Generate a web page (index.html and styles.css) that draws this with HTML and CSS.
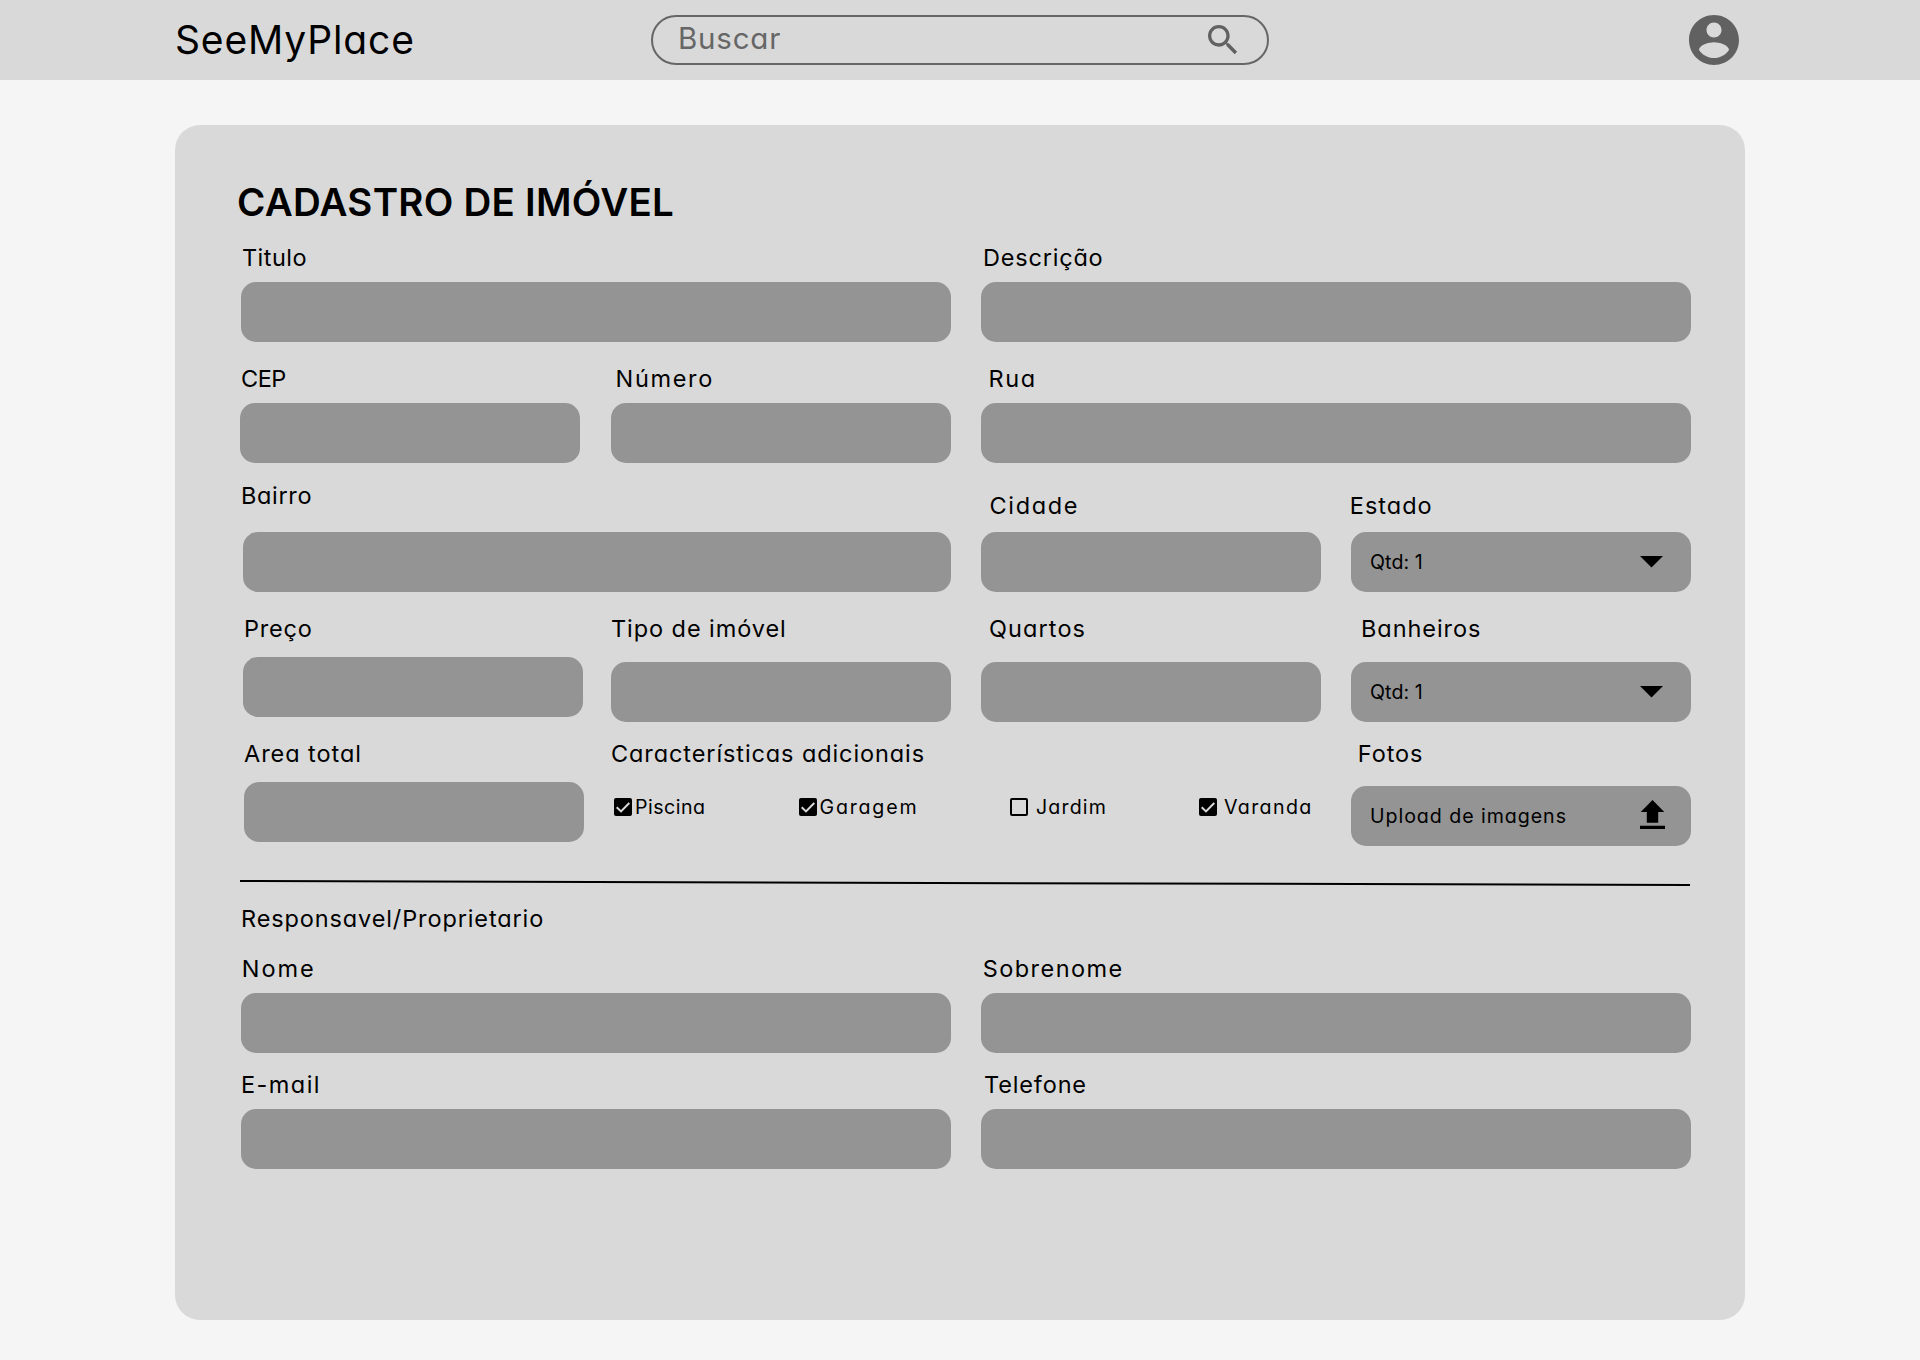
FILE: index.html
```html
<!DOCTYPE html>
<html lang="pt-BR">
<head>
<meta charset="utf-8">
<title>SeeMyPlace</title>
<link rel="stylesheet" href="styles.css">
</head>
<body>
<header class="topbar">
  <span class="brand">SeeMyPlace</span>
  <div class="search">
    <span class="search-text">Buscar</span>
    <svg class="search-icon" viewBox="0 0 24 24"><path d="M15.5 14h-.79l-.28-.27C15.41 12.59 16 11.11 16 9.5 16 5.91 13.09 3 9.5 3S3 5.91 3 9.5 5.91 16 9.5 16c1.61 0 3.09-.59 4.23-1.57l.27.28v.79l5 4.99L20.49 19l-4.99-5zm-6 0C7.01 14 5 11.99 5 9.5S7.01 5 9.5 5 14 7.01 14 9.5 11.99 14 9.5 14z"/></svg>
  </div>
  <svg class="account" viewBox="2 2 20 20"><path d="M12 2C6.48 2 2 6.48 2 12s4.48 10 10 10 10-4.48 10-10S17.52 2 12 2zm0 3c1.66 0 3 1.34 3 3s-1.34 3-3 3-3-1.34-3-3 1.34-3 3-3zm0 14.2c-2.5 0-4.71-1.28-6-3.22.03-1.99 4-3.08 6-3.08 1.99 0 5.97 1.09 6 3.08-1.29 1.94-3.5 3.22-6 3.22z"/></svg>
</header>

<main class="card">
  <h1 class="title">CADASTRO DE IMÓVEL</h1>

  <div class="row">
    <div class="cell wide"><span class="label titulo">Titulo</span><div class="field"></div></div>
    <div class="cell wide"><span class="label descricao">Descrição</span><div class="field"></div></div>
  </div>

  <div class="row row-endereco">
    <div class="cell"><span class="label cep">CEP</span><div class="field field-cep"></div></div>
    <div class="cell"><span class="label numero">Número</span><div class="field"></div></div>
    <div class="cell wide"><span class="label rua">Rua</span><div class="field"></div></div>
  </div>

  <div class="row row-bairro">
    <div class="cell wide cell-bairro"><span class="label bairro">Bairro</span><div class="field field-bairro"></div></div>
    <div class="cell cell-low"><span class="label cidade">Cidade</span><div class="field"></div></div>
    <div class="cell cell-low"><span class="label estado">Estado</span>
      <div class="field select"><span class="value qtd">Qtd: 1</span><svg class="caret" viewBox="0 0 23 12"><path d="M0 0h23L11.5 11.5z"/></svg></div>
    </div>
  </div>

  <div class="row row-preco">
    <div class="cell cell-preco"><span class="label preco">Preço</span><div class="field field-preco"></div></div>
    <div class="cell"><span class="label tipo">Tipo de imóvel</span><div class="field"></div></div>
    <div class="cell"><span class="label quartos">Quartos</span><div class="field"></div></div>
    <div class="cell"><span class="label banheiros">Banheiros</span>
      <div class="field select"><span class="value qtd">Qtd: 1</span><svg class="caret" viewBox="0 0 23 12"><path d="M0 0h23L11.5 11.5z"/></svg></div>
    </div>
  </div>

  <div class="row row-area">
    <div class="cell cell-area"><span class="label area">Area total</span><div class="field field-area"></div></div>
    <div class="cell wide"><span class="label caracteristicas">Características adicionais</span>
      <div class="options">
        <div class="option piscina"><svg class="box" viewBox="0 0 18 18"><rect width="18" height="18" rx="2"/><path class="tick" d="M2.7 9.2 7 13.4 15.3 5"/></svg><span class="value">Piscina</span></div>
        <div class="option garagem"><svg class="box" viewBox="0 0 18 18"><rect width="18" height="18" rx="2"/><path class="tick" d="M2.7 9.2 7 13.4 15.3 5"/></svg><span class="value">Garagem</span></div>
        <div class="option jardim"><svg class="box" viewBox="0 0 18 18"><rect class="empty" x="1" y="1" width="16" height="16" rx="1"/></svg><span class="value">Jardim</span></div>
        <div class="option varanda"><svg class="box" viewBox="0 0 18 18"><rect width="18" height="18" rx="2"/><path class="tick" d="M2.7 9.2 7 13.4 15.3 5"/></svg><span class="value">Varanda</span></div>
      </div>
    </div>
    <div class="cell"><span class="label fotos">Fotos</span>
      <div class="field select"><span class="value upload-text">Upload de imagens</span><svg class="upload" viewBox="0 0 25 29"><path d="M12.5 0 24.3 12H18.2V22.7H6.8V12H.7zM0 25.8H25V29H0z"/></svg></div>
    </div>
  </div>

  <svg class="divider" viewBox="0 0 1450 8"><path d="M0 2 1450 6"/></svg>

  <span class="label responsavel">Responsavel/Proprietario</span>

  <div class="row row-nome">
    <div class="cell wide"><span class="label nome">Nome</span><div class="field"></div></div>
    <div class="cell wide"><span class="label sobrenome">Sobrenome</span><div class="field"></div></div>
  </div>

  <div class="row row-email">
    <div class="cell wide"><span class="label email">E-mail</span><div class="field"></div></div>
    <div class="cell wide"><span class="label telefone">Telefone</span><div class="field"></div></div>
  </div>
</main>
</body>
</html>
```
FILE: styles.css
```css
* { box-sizing: border-box; }

body {
  margin: 0;
  min-height: 1360px;
  background: #f5f5f5;
  color: #000;
  font-family: Inter, "Open Sans", sans-serif;
  font-feature-settings: "cv11";
}

svg { display: block; flex: none; }

/* Top bar */
.topbar {
  display: flex;
  align-items: center;
  justify-content: space-between;
  height: 80px;
  padding: 0 181px 0 175px;
  background: #d9d9d9;
}
.brand {
  width: 476px;
  font-size: 39px;
  line-height: 60px;
  letter-spacing: 0.85px;
}
.search {
  display: flex;
  align-items: center;
  justify-content: space-between;
  width: 618px;
  height: 50px;
  margin-right: 420px;
  padding: 0 24px 0 25px;
  border: 2px solid #666;
  border-radius: 25px;
}
.search-text {
  margin-bottom: 4px;
  color: #666;
  font-size: 29.5px;
  line-height: 40px;
  letter-spacing: 0.8px;
}
.search-icon { width: 40px; height: 40px; fill: #616161; }
.account { width: 50px; height: 50px; fill: #616161; }

/* Form card */
.card {
  display: flex;
  flex-direction: column;
  width: 1570px;
  height: 1195px;
  margin: 45px 0 0 175px;
  padding: 47px 54px 0 66px;
  border-radius: 25px;
  background: #d9d9d9;
}
.title {
  margin: 0 0 8px -4px;
  font-size: 38.5px;
  font-weight: 600;
  line-height: 60px;
  letter-spacing: 0.26px;
}

.row {
  display: grid;
  grid-template-columns: repeat(4, 340px);
  column-gap: 30px;
}
.row-endereco { margin-top: 19px; }
.row-bairro { margin-top: 15px; }
.row-preco { margin-top: 19px; }
.row-area { margin-top: 14px; }
.row-nome { margin-top: 14px; }
.row-email { margin-top: 14px; }

.cell {
  display: flex;
  flex-direction: column;
  gap: 6px;
}
.wide { grid-column: span 2; }
.cell-bairro { gap: 18px; }
.cell-low { gap: 8px; padding-top: 10px; }
.row-preco .cell { gap: 15px; }
.row-preco .cell-preco { gap: 10px; }
.row-area .cell { gap: 14px; }
.row-area .cell-area { gap: 10px; }

.label {
  height: 36px;
  font-size: 23.5px;
  line-height: 36px;
  letter-spacing: 0.93px;
  white-space: nowrap;
}
.titulo { padding-left: 1px; letter-spacing: 0.45px; }
.descricao { padding-left: 2px; letter-spacing: 0.8px; }
.cep { letter-spacing: -0.5px; }
.numero { padding-left: 4.6px; letter-spacing: 1.65px; }
.rua { padding-left: 7.6px; letter-spacing: 1.6px; }
.bairro { letter-spacing: 0.65px; }
.cidade { padding-left: 8.5px; letter-spacing: 1.65px; }
.estado { margin-left: -1.2px; letter-spacing: 1px; }
.preco { padding-left: 3px; letter-spacing: 0.8px; }
.quartos { padding-left: 8px; letter-spacing: 1.1px; }
.banheiros { padding-left: 10px; letter-spacing: 0.93px; }
.area { padding-left: 3px; letter-spacing: 0.95px; }
.caracteristicas { letter-spacing: 0.9px; }
.fotos { padding-left: 6.8px; letter-spacing: 0.9px; }
.responsavel { margin-top: 14px; letter-spacing: 0.88px; }
.nome { padding-left: 0.7px; letter-spacing: 2px; }
.sobrenome { padding-left: 1.7px; letter-spacing: 1.45px; }
.email { letter-spacing: 1.45px; }
.telefone { padding-left: 3px; letter-spacing: 0.85px; }

.field {
  height: 60px;
  border-radius: 15px;
  background: #949494;
}
.field-cep { margin: 0 1px 0 -1px; }
.field-bairro { margin-left: 2px; }
.field-preco { margin: 0 -2px 0 2px; }
.field-area { margin: 0 -3px 0 3px; }

.value {
  font-size: 19.6px;
  line-height: 30px;
  white-space: nowrap;
}
.qtd { letter-spacing: 0.1px; }
.upload-text { letter-spacing: 0.95px; }

.select {
  display: flex;
  align-items: center;
  justify-content: space-between;
  padding: 0 26px 0 19px;
}
.caret { width: 23px; height: 12px; margin-right: 2px; }
.upload { width: 25px; height: 29px; margin-bottom: 3px; }

/* Feature checkboxes */
.options {
  display: flex;
  align-items: center;
  height: 30px;
  margin-top: 6px;
}
.option { display: flex; align-items: center; }
.box { width: 18px; height: 18px; }
.tick { fill: none; stroke: #d9d9d9; stroke-width: 2; }
.empty { fill: none; stroke: #000; stroke-width: 2; }
.piscina { width: 188px; padding-left: 3px; gap: 3px; letter-spacing: 0.5px; }
.garagem { width: 211px; gap: 2.5px; letter-spacing: 1.8px; }
.jardim { width: 189px; gap: 8px; letter-spacing: 1.15px; }
.varanda { gap: 7px; letter-spacing: 1.35px; }

.divider {
  width: 1450px;
  height: 8px;
  margin: 33px 0 0 -1px;
  fill: none;
  stroke: #000;
  stroke-width: 2;
}
```
